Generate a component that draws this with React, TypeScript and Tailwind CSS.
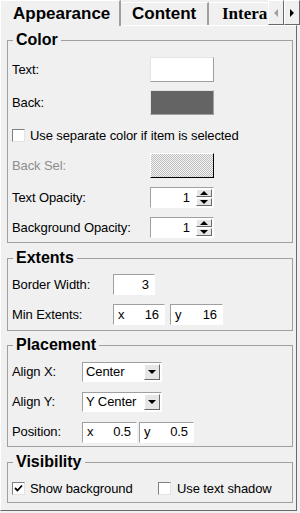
import React from 'react';

const sunken = 'border border-t-[#a0a0a0] border-l-[#a0a0a0] border-b-white border-r-white bg-white';
const raised = 'border border-t-white border-l-white border-b-[#696969] border-r-[#696969] bg-[#e6e6e6]';

const Arrow = ({ dir, color = '#000' }: { dir: 'up' | 'down' | 'left' | 'right'; color?: string }) => {
  const pts = {
    up: '0,4 4,0 8,4',
    down: '0,0 8,0 4,4',
    left: '4,0 4,8 0,4',
    right: '0,0 0,8 4,4',
  }[dir];
  const w = dir === 'up' || dir === 'down' ? 8 : 4;
  const h = dir === 'up' || dir === 'down' ? 4 : 8;
  return (
    <svg width={w} height={h} viewBox={`0 0 ${w} ${h}`}>
      <polygon points={pts} fill={color} />
    </svg>
  );
};

const Check = ({ checked }: { checked?: boolean }) => (
  <span className="w-[13px] h-[13px] shrink-0 border border-t-[#808080] border-l-[#808080] border-b-[#e3e3e3] border-r-[#e3e3e3] bg-white flex items-center justify-center">
    {checked && (
      <svg width="9" height="9" viewBox="0 0 9 9">
        <path d="M1 4 L3.5 6.5 L8 1.5" stroke="#000" strokeWidth="1.8" fill="none" />
      </svg>
    )}
  </span>
);

const Spin = ({ value }: { value: string }) => (
  <div className={`w-[64px] h-[21px] flex items-center ${sunken}`}>
    <span className="flex-1 text-right pr-[6px]">{value}</span>
    <div className="w-[17px] h-full flex flex-col gap-px py-px pr-px">
      <span className={`flex-1 flex items-center justify-center ${raised}`}>
        <Arrow dir="up" />
      </span>
      <span className={`flex-1 flex items-center justify-center ${raised}`}>
        <Arrow dir="down" />
      </span>
    </div>
  </div>
);

const Field = ({ prefix, value, className }: { prefix?: string; value: string; className: string }) => (
  <div className={`h-[21px] flex items-center px-[4px] ${sunken} ${className}`}>
    {prefix && <span className="w-[10px]">{prefix}</span>}
    <span className="flex-1 text-right pr-[1px]">{value}</span>
  </div>
);

const Select = ({ value }: { value: string }) => (
  <div className={`w-[80px] h-[20px] flex items-center ${sunken}`}>
    <span className="flex-1 pl-[3px]">{value}</span>
    <span className={`w-[16px] h-[16px] mr-px flex items-center justify-center ${raised}`}>
      <Arrow dir="down" />
    </span>
  </div>
);

const Group = ({ title, className, children }: { title: string; className: string; children: React.ReactNode }) => (
  <fieldset className={`border border-[#a0a0a0] ${className}`}>
    <legend className="ml-[5px] px-[3px] text-[16px] font-bold leading-[18px] tracking-normal">{title}</legend>
    {children}
  </fieldset>
);

export default function App() {
  return (
    <div
      className="w-[300px] h-[513px] bg-[#f0f0f0] text-[13px] text-black tracking-[-0.1px] overflow-hidden"
      style={{ fontFamily: '"Liberation Sans", Arial, sans-serif' }}
    >
      {/* Tab strip */}
      <div className="flex h-[25px]">
        <div className="relative z-10 w-[121px] h-[26px] shrink-0 pl-[12px] pt-[3px] text-[17px] font-bold leading-[20px] tracking-normal bg-[#f0f0f0] border-l border-t border-white border-r-2 border-r-[#a0a0a0]">
          Appearance
        </div>
        <div className="w-[88px] h-[23px] mt-[2px] shrink-0 pl-[11px] pt-[1px] text-[17px] font-bold leading-[20px] tracking-normal border-t border-white border-r-2 border-r-[#a0a0a0]">
          Content
        </div>
        <div
          className="flex-1 min-w-0 h-[23px] mt-[2px] pl-[13px] pt-[1px] overflow-hidden whitespace-nowrap text-[17px] font-bold leading-[20px] tracking-normal border-t border-white"
          style={{ fontFamily: '"Liberation Serif", "Times New Roman", serif' }}
        >
          Intera
        </div>
        <div className="flex shrink-0 h-[25px]">
          <span className={`w-[16px] h-[25px] flex items-center justify-center ${raised} bg-[#f0f0f0] border-b-[#000] border-r-[#000]`}>
            <Arrow dir="left" color="#a0a0a0" />
          </span>
          <span className={`w-[16px] h-[25px] flex items-center justify-center ${raised} bg-[#f0f0f0]`}>
            <Arrow dir="right" />
          </span>
        </div>
      </div>

      {/* Panel */}
      <div className="w-[297px] h-[486px] border border-t-white border-l-white border-r-[#696969] border-b-[#696969] pl-[6px] pr-[3px] pt-[5px]">
        <Group title="Color" className="">
          <div className="pl-[4px] pt-[8px] pb-[4px]">
            <div className="flex items-center h-[25px]">
              <span className="w-[138px]">Text:</span>
              <span className="w-[64px] h-[25px] bg-white border border-t-[#e3e3e3] border-l-[#e3e3e3] border-b-[#a0a0a0] border-r-[#a0a0a0]" />
            </div>
            <div className="flex items-center h-[25px] mt-[8px]">
              <span className="w-[138px]">Back:</span>
              <span className="w-[64px] h-[25px] bg-[#646464] border border-t-[#e3e3e3] border-l-[#e3e3e3] border-b-[#a0a0a0] border-r-[#a0a0a0]" />
            </div>
            <div className="flex items-center gap-[5px] h-[25px] mt-[8px]">
              <Check />
              <span>Use separate color if item is selected</span>
            </div>
            <div className="flex items-center h-[25px] mt-[5px]">
              <span className="w-[138px] text-[#8d8d8d]">Back Sel:</span>
              <span className="w-[64px] h-[25px] bg-[repeating-conic-gradient(#bdbdbd_0%_25%,#f4f4f4_0%_50%)] bg-[length:2px_2px] border border-t-white border-l-white border-b-[#000] border-r-[#000]" />
            </div>
            <div className="flex items-center h-[21px] mt-[9px]">
              <span className="w-[138px]">Text Opacity:</span>
              <Spin value="1" />
            </div>
            <div className="flex items-center h-[21px] mt-[9px]">
              <span className="w-[138px]">Background Opacity:</span>
              <Spin value="1" />
            </div>
          </div>
        </Group>

        <Group title="Extents" className="mt-[6px]">
          <div className="pl-[4px] pt-[7px] pb-[5px]">
            <div className="flex items-center h-[21px]">
              <span className="w-[101px]">Border Width:</span>
              <Field value="3" className="w-[42px]" />
            </div>
            <div className="flex items-center gap-[5px] h-[21px] mt-[9px]">
              <span className="w-[96px]">Min Extents:</span>
              <Field prefix="x" value="16" className="w-[52px]" />
              <Field prefix="y" value="16" className="w-[53px]" />
            </div>
          </div>
        </Group>

        <Group title="Placement" className="mt-[5px]">
          <div className="pl-[4px] pt-[8px] pb-[4px]">
            <div className="flex items-center h-[20px]">
              <span className="w-[70px]">Align X:</span>
              <Select value="Center" />
            </div>
            <div className="flex items-center h-[20px] mt-[10px]">
              <span className="w-[70px]">Align Y:</span>
              <Select value="Y Center" />
            </div>
            <div className="flex items-center gap-[2px] h-[20px] mt-[10px]">
              <span className="w-[68px]">Position:</span>
              <Field prefix="x" value="0.5" className="w-[55px]" />
              <Field prefix="y" value="0.5" className="w-[55px]" />
            </div>
          </div>
        </Group>

        <Group title="Visibility" className="mt-[6px]">
          <div className="pl-[4px] pt-[5px] pb-[1px]">
            <div className="flex items-center h-[25px]">
              <div className="w-[146px] flex items-center gap-[5px]">
                <Check checked />
                <span>Show background</span>
              </div>
              <div className="flex items-center gap-[6px]">
                <Check />
                <span>Use text shadow</span>
              </div>
            </div>
          </div>
        </Group>
      </div>
    </div>
  );
}
